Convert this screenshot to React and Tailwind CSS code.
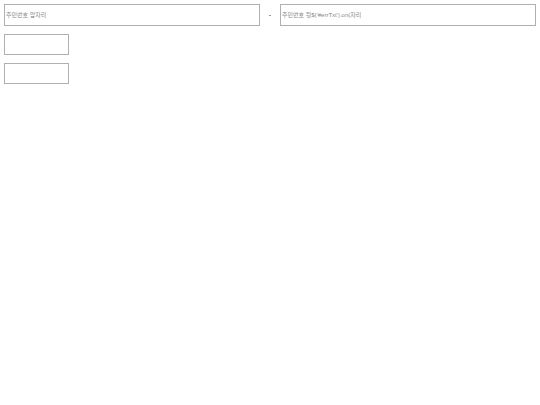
export default function App() {
  const font = { fontFamily: '"Liberation Sans", "Noto Sans CJK KR", sans-serif' };
  return (
    <div className="p-1 bg-white min-h-[405px]" style={font}>
      <div className="flex items-center">
        <input
          type="text"
          placeholder="주민번호 앞자리"
          className="w-[256px] h-[22px] border border-[#b0b0b0] px-px text-[6px] outline-none placeholder:text-[#888]"
        />
        <span className="w-[20px] text-center text-[7px] text-[#333]">-</span>
        <input
          type="text"
          placeholder={"주민번호 뒷$('#errTxt').on(자리"}
          className="w-[256px] h-[22px] border border-[#b0b0b0] px-px text-[6px] outline-none placeholder:text-[#888]"
        />
      </div>
      <div className="mt-[8px] w-[65px] h-[21px] border border-[#b0b0b0]" />
      <div className="mt-[8px] w-[65px] h-[21px] border border-[#b0b0b0]" />
    </div>
  );
}
